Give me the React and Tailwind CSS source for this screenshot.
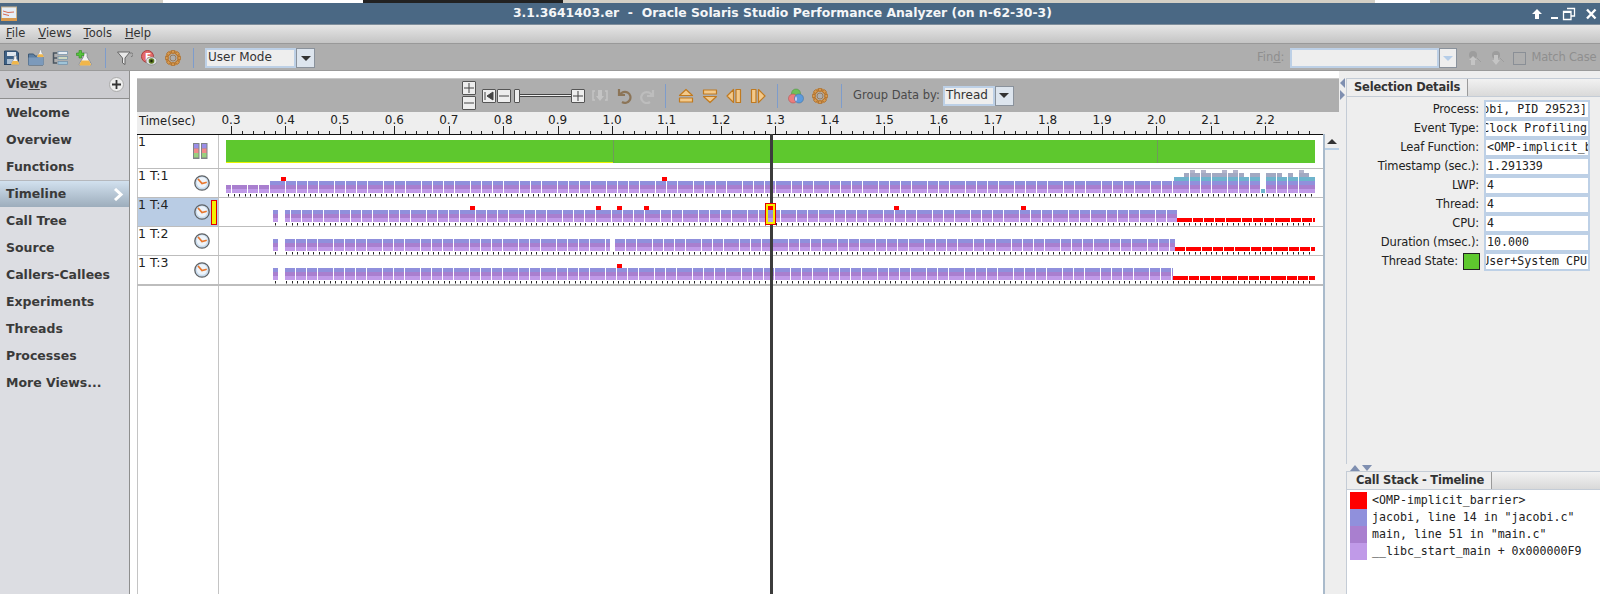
import React from "react";

const PATTERN = [15, 10, 10, 10, 15, 10, 10, 10, 15, 10, 10];

// walks the pattern from start to end, gap of 1px between runs
const fill = (start, end, offset = 0) => {
  const out = [];
  let x = start;
  let i = offset;
  while (x < end) {
    const w = Math.min(PATTERN[i % PATTERN.length], end - x);
    out.push([x, w]);
    x += w + 1;
    i++;
  }
  return out;
};

const T1_TAIL = [
  [1174, 10, 4], [1184, 5, 5], [1190, 5, 6], [1195, 5, 5], [1201, 5, 6], [1206, 5, 5],
  [1212, 5, 5], [1217, 5, 5], [1222, 5, 6], [1228, 5, 5], [1233, 5, 6], [1239, 5, 5],
  [1244, 5, 4], [1250, 10, 5], [1266, 10, 5], [1277, 5, 5], [1282, 5, 4], [1288, 5, 5],
  [1293, 5, 4], [1299, 5, 6], [1304, 5, 5], [1309, 6, 4],
];

const ROWS = [
  {
    label: "1 T:1",
    low: [[226, 5], [232, 15], [248, 10], [259, 10]],
    bars: fill(270, 1174),
    tail: T1_TAIL,
    reds: [],
    squares: [281, 662],
    from: 226,
  },
  {
    label: "1 T:4",
    selected: true,
    low: [],
    bars: [[273, 5], [285, 5], ...fill(291, 1177, 1)],
    tail: [],
    reds: fill(1177, 1315),
    squares: [470, 596, 617, 644, 894, 1021],
    from: 273,
  },
  {
    label: "1 T:2",
    low: [],
    bars: [[273, 5], ...fill(285, 610, 1), ...fill(615, 1175, 2)],
    tail: [],
    reds: fill(1175, 1315, 3),
    squares: [],
    from: 273,
  },
  {
    label: "1 T:3",
    low: [],
    bars: [[273, 5], ...fill(285, 1173, 1)],
    tail: [],
    reds: fill(1173, 1315, 0),
    squares: [617],
    from: 273,
  },
];

const BANDS = ["#c09ae8", "#a97fcf", "#9090dc", "#6fb4cc", "#a2a9c2", "#b3b5cb"];

const Stack = ({ x, w, levels }) => (
  <>
    {Array.from({ length: levels }).map((_, i) => (
      <rect key={i} x={x} y={i === 5 ? 1 : 20 - i * 4} width={w} height={i === 5 ? 3 : 4} fill={BANDS[i]} />
    ))}
  </>
);

const Ticks = ({ from }) => {
  const ticks = [];
  for (let x = from + 2.3; x < 1314; x += 5.44) {
    if (from === 273 && x > 279 && x < 285) continue;
    ticks.push(<rect key={x} x={Math.round(x)} y={25} width={1} height={2.5} fill="#222" />);
  }
  return <>{ticks}</>;
};

const Chart = ({ row }) => (
  <svg width="1104" height="28" viewBox="219 0 1104 28" className="block">
    {row.low.map(([x, w]) => <Stack key={x} x={x} w={w} levels={2} />)}
    {row.bars.map(([x, w]) => <Stack key={x} x={x} w={w} levels={3} />)}
    {row.tail.map(([x, w, l]) => <Stack key={x} x={x} w={w} levels={l} />)}
    {row.label === "1 T:1" && <rect x={1261} y={20} width={4} height={4} fill="#6fb4cc" />}
    {row.reds.map(([x, w]) => <rect key={x} x={x} y={20} width={w} height={4} fill="#ff0000" />)}
    {row.squares.map((x) => <rect key={x} x={x} y={8} width={5} height={4} fill="#ff0000" />)}
    <Ticks from={row.from} />
  </svg>
);

const Ruler = () => {
  const minor = [];
  for (let i = -3; i < 100; i++) {
    const x = 231 + i * 10.888;
    if (x > 1322 || x < 222) continue;
    const major = (i % 5 + 5) % 5 === 0;
    minor.push(<rect key={i} x={Math.round(x)} y={major ? 14 : 19} width={1} height={major ? 8 : 3} fill="#222" />);
  }
  const labels = [];
  for (let i = 0; i < 20; i++) {
    const x = 231 + i * 54.44;
    labels.push(
      <text key={i} x={x} y={12} textAnchor="middle" fontSize="12" fill="#222" fontFamily="'DejaVu Sans', sans-serif">
        {(0.3 + i * 0.1).toFixed(1)}
      </text>
    );
  }
  return (
    <svg width="1104" height="22" viewBox="219 0 1104 22" className="block">
      {minor}
      {labels}
    </svg>
  );
};

/* ---- icons ---- */
const Flask = ({ x = 0, y = 0, s = 1 }) => (
  <g transform={`translate(${x} ${y}) scale(${s})`}>
    <path d="M3.5 0h3v3l3.2 5.5c.5 1-.2 1.8-1.2 1.8h-7c-1 0-1.7-.8-1.2-1.8L3.5 3z" fill="#f4f4f4" stroke="#8a8f98" strokeWidth=".8" />
    <path d="M2 6h6l1.5 3c.2.6-.2 1-.9 1H1.400c-.7 0-1.100-.4-.9-1z" fill="#f0b64a" />
  </g>
);

const Svg16 = ({ children, size = 16, className = "" }) => (
  <svg width={size} height={size} viewBox="0 0 16 16" className={`block shrink-0 ${className}`}>{children}</svg>
);

const SaveIcon = () => (
  <Svg16>
    <path d="M0.500 1h12l2 2v11.500h-14.500z" fill="#3d6187" stroke="#2b4461" />
    <rect x="3" y="2" width="9" height="4" fill="#dfe6ee" />
    <rect x="3" y="9" width="6" height="5" fill="#a9bdd0" />
    <Flask x={7} y={6} s={0.85} />
  </Svg16>
);

const FolderIcon = () => (
  <Svg16>
    <path d="M0.500 4h5l1.500 2h8v9h-14.500z" fill="#5c7fa3" stroke="#3d5874" />
    <path d="M0.500 7.500h15v7.500h-15z" fill="#7c9abb" />
    <Flask x={9} y={0} s={0.7} />
  </Svg16>
);

const ListIcon = () => (
  <Svg16>
    <path d="M5 3H1.500v10H5" fill="none" stroke="#4a5560" strokeWidth="1.500" />
    <path d="M1.500 8H5" stroke="#4a5560" strokeWidth="1.500" />
    <rect x="6" y="1.500" width="9.500" height="3" fill="#e8eef4" stroke="#6f8fa8" strokeWidth=".7" />
    <rect x="6" y="6.500" width="9.500" height="3" fill="#cfd8c0" stroke="#6f8fa8" strokeWidth=".7" />
    <rect x="6" y="11.500" width="9.500" height="3" fill="#9fc4d8" stroke="#6f8fa8" strokeWidth=".7" />
  </Svg16>
);

const FlaskPlusIcon = () => (
  <Svg16>
    <Flask x={3} y={3} s={1.250} />
    <path d="M3 0.500h2.500v2.500H8v2.500H5.500V8H3V5.500H0.500V3H3z" fill="#55c43c" stroke="#2f8a22" strokeWidth=".6" />
  </Svg16>
);

const FilterIcon = () => (
  <Svg16>
    <path d="M0.500 2h12.500l-5 6v6.500l-2.500-1.500V8z" fill="#e8e8e8" stroke="#666" />
    <path d="M13 3.500a1.800 1.800 0 1 1 1 3" fill="none" stroke="#777" />
  </Svg16>
);

const EyeIcon = () => (
  <Svg16>
    <circle cx="6.500" cy="6.500" r="6" fill="#e46a6a" stroke="#a84040" />
    <text x="4" y="10" fontSize="9" fill="#fff" fontWeight="700" fontFamily="'DejaVu Sans', sans-serif">F</text>
    <ellipse cx="10.500" cy="11" rx="5.500" ry="4" fill="#dfe3e6" stroke="#777" strokeWidth=".6" />
    <circle cx="10.500" cy="11" r="2.800" fill="#5d7a1e" />
    <circle cx="10.500" cy="11" r="1.200" fill="#1c2408" />
  </Svg16>
);

const GearIcon = () => (
  <Svg16>
    <g fill="#d99a4e" stroke="#96602a" strokeWidth=".6">
      <circle cx="8" cy="8" r="6" fill="none" stroke="#c98a40" strokeWidth="3.400" />
      {[0, 45, 90, 135, 180, 225, 270, 315].map((a) => (
        <rect key={a} x="6.400" y="0.300" width="3.200" height="2.800" rx=".8" transform={`rotate(${a} 8 8)`} />
      ))}
    </g>
    <circle cx="8" cy="8" r="3" fill="#aeaeae" stroke="#8a5a28" strokeWidth=".6" />
  </Svg16>
);

const Orange = ({ d }) => (
  <Svg16>
    <path d={d} fill="#f3c98a" stroke="#c07a20" strokeWidth="1.200" strokeLinejoin="round" />
  </Svg16>
);

const ColorsIcon = () => (
  <Svg16>
    <circle cx="8" cy="5.500" r="4.500" fill="#6fbf5a" stroke="#4d8a40" strokeWidth=".5" />
    <circle cx="5" cy="10.500" r="4.500" fill="#ec7d7d" stroke="#a84a4a" strokeWidth=".5" />
    <circle cx="11" cy="10.500" r="4.500" fill="#5d9bdc" stroke="#3d6a9a" strokeWidth=".5" />
    <path d="M8 8.200a4.500 4.500 0 0 1 0 5.400 4.500 4.500 0 0 1 0-5.400z" fill="#d8d0f0" />
  </Svg16>
);

const ClockIcon = () => (
  <svg width="16" height="16" viewBox="0 0 16 16" className="block shrink-0">
    <circle cx="8" cy="8" r="7.200" fill="#c9dcee" stroke="#5f6265" strokeWidth="1.300" />
    <circle cx="8" cy="7.500" r="5.200" fill="#eef4fa" />
    <path d="M4.500 4.500L8 8.500l4-1" fill="none" stroke="#e8772e" strokeWidth="1.800" strokeLinecap="round" />
  </svg>
);

const MiniBars = () => (
  <svg width="15" height="16" viewBox="0 0 15 16" className="block shrink-0">
    {[0, 8].map((x) => (
      <g key={x}>
        <rect x={x} y="0" width="6.500" height="16" fill="#7f8288" />
        <rect x={x + 1} y="1" width="4.500" height="4.500" fill="#9a8ee8" />
        <rect x={x + 1} y="5.500" width="4.500" height="4.500" fill="#f08a8a" />
        <rect x={x + 1} y="10" width="4.500" height="4.500" fill="#9ad07e" />
      </g>
    ))}
  </svg>
);

const SmallBtn = ({ children, className = "" }) => (
  <div className={`w-[14px] h-[14px] flex items-center justify-center shrink-0 bg-[#eeeeee] border border-[#555] rounded-[1px] text-[#333] ${className}`}>
    {children}
  </div>
);

const Plus = () => (
  <svg width="10" height="10" viewBox="0 0 10 10"><path d="M0 5h10M5 0v10" stroke="#444" strokeWidth="1" /></svg>
);
const Minus = () => (
  <svg width="10" height="10" viewBox="0 0 10 10"><path d="M0 5h10" stroke="#444" strokeWidth="1" /></svg>
);

const Sep = ({ className = "" }) => <div className={`w-[1px] h-[20px] bg-[#7d9ccc] shrink-0 ${className}`} />;

const Combo = ({ text, w, btn = "w-[19px]", disabled }) => (
  <div className="flex h-[20px] shrink-0">
    <div className={`border-2 border-[#bdd0e6] bg-[#eeeeee] text-[12px] leading-[15px] px-[1px] text-[#333] ${w}`}>{text}</div>
    <div className={`flex items-center justify-center border border-[#8a929c] ${disabled ? "bg-[#eeeeee]" : "bg-[#dde5ee]"} ${btn}`}>
      <div className={`w-0 h-0 border-x-[5px] border-x-transparent border-t-[5px] ${disabled ? "border-t-[#b5cde8]" : "border-t-[#333]"}`} />
    </div>
  </div>
);

const VIEWS = ["Welcome", "Overview", "Functions", "Timeline", "Call Tree", "Source", "Callers-Callees", "Experiments", "Threads", "Processes", "More Views..."];

const DETAILS = [
  { label: "Process:", value: "obi, PID 29523]", right: true },
  { label: "Event Type:", value: "Clock Profiling", right: true },
  { label: "Leaf Function:", value: "<OMP-implicit_barrier>" },
  { label: "Timestamp (sec.):", value: "1.291339" },
  { label: "LWP:", value: "4" },
  { label: "Thread:", value: "4" },
  { label: "CPU:", value: "4" },
  { label: "Duration (msec.):", value: "10.000" },
  { label: "Thread State:", value: "User+System CPU", right: true, swatch: true },
];

const STACK = [
  ["#ff0000", "<OMP-implicit_barrier>"],
  ["#9090dc", 'jacobi, line 14 in "jacobi.c"'],
  ["#a97fcf", 'main, line 51 in "main.c"'],
  ["#c09ae8", "__libc_start_main + 0x000000F9"],
];

const Tab = ({ title, w }) => (
  <div className="flex h-[18px] bg-gradient-to-b from-[#f2f2f2] to-[#d9d9d9] border-b border-[#c4ccd6] shrink-0">
    <div className={`bg-[#eeeeee] border-r border-[#9a9a9a] font-bold text-[11.500px] tracking-[-0.2px] leading-[17px] text-[#333] whitespace-nowrap ${w}`}>{title}</div>
  </div>
);

export default function App() {
  return (
    <div className="w-[1600px] h-[594px] overflow-hidden flex flex-col bg-white font-['DejaVu_Sans',sans-serif] text-[#222]">
      {/* desktop strip behind the window */}
      <div className="flex h-[3px] shrink-0 bg-[#d4d0c6]">
        <div className="w-[163px]" />
        <div className="w-[200px] bg-white" />
        <div className="w-[200px] bg-[#222]" />
        <div className="w-[812px]" />
        <div className="w-[55px] bg-white" />
      </div>

      {/* title bar */}
      <div className="flex items-center h-[22px] shrink-0 bg-[#4a6884] border-b border-[#7f8e9c]">
        <svg width="16" height="16" viewBox="0 0 16 16" className="block ml-[1px] shrink-0">
          <rect x="0.500" y="1" width="15" height="13" fill="#e6eef6" stroke="#c9b28c" />
          <path d="M2 5l5 1.500 6-.5M2 8l6 1.500" stroke="#d86a50" strokeWidth="1" fill="none" />
          <rect x="0" y="12" width="16" height="3" fill="#d99a4e" />
        </svg>
        <div className="ml-[496px] font-bold text-[12.400px] text-[#f4f6f8] whitespace-pre">3.1.3641403.er  -  Oracle Solaris Studio Performance Analyzer (on n-62-30-3)</div>
        <div className="ml-auto flex items-center pr-[2px] text-white">
          <svg width="14" height="14" viewBox="0 0 14 14"><path d="M7 2l5 5H9v5H5V7H2z" fill="#fff" /></svg>
          <svg width="14" height="14" viewBox="0 0 14 14" className="ml-[4px]"><rect x="3" y="10" width="7" height="2" fill="#fff" /></svg>
          <svg width="14" height="14" viewBox="0 0 14 14"><path d="M1.500 4.500h7.500v8H1.500zM5 1.500h7.500v7.500H9" fill="none" stroke="#fff" strokeWidth="1.300" /><rect x="1" y="4" width="8" height="2" fill="#fff" /></svg>
          <svg width="14" height="14" viewBox="0 0 14 14" className="ml-[8px]"><path d="M3 2.500l8.500 9M11.500 2.500l-8.500 9" stroke="#fff" strokeWidth="2.400" /></svg>
        </div>
      </div>

      {/* menu */}
      <div className="flex items-center h-[19px] shrink-0 bg-gradient-to-b from-[#e6e6e6] to-[#c4c4c4] border-b border-[#999] text-[11.500px] text-[#333]">
        <span className="ml-[6px]"><u>F</u>ile</span>
        <span className="ml-[13px]"><u>V</u>iews</span>
        <span className="ml-[12px]"><u>T</u>ools</span>
        <span className="ml-[13px]"><u>H</u>elp</span>
      </div>

      {/* main toolbar */}
      <div className="flex items-center h-[27px] shrink-0 pt-[2px] bg-[#aeaeae] border-b border-[#9a9a9a]">
        <div className="flex items-center gap-[8px] ml-[4px]">
          <SaveIcon /><FolderIcon /><ListIcon /><FlaskPlusIcon />
        </div>
        <Sep className="ml-[13px]" />
        <div className="flex items-center gap-[8px] ml-[11px]">
          <FilterIcon /><EyeIcon /><GearIcon />
        </div>
        <Sep className="ml-[12px]" />
        <div className="ml-[11px]"><Combo text="User Mode" w="w-[91px]" /></div>
        <span className="ml-[942px] text-[11.500px] text-[#8f8f8f]">Fin<u>d</u>:</span>
        <div className="ml-[6px]"><Combo text="" w="w-[149px]" btn="w-[18px]" disabled /></div>
        <svg width="16" height="16" viewBox="0 0 16 16" className="block ml-[9px] shrink-0"><circle cx="7" cy="5" r="4" fill="#9d9d9d" /><path d="M7 6l4 4H9v5H5v-5H3z" fill="#c4c4c4" /><path d="M11 8l4 4" stroke="#9d9d9d" /></svg>
        <svg width="16" height="16" viewBox="0 0 16 16" className="block ml-[7px] shrink-0"><circle cx="7" cy="5" r="4" fill="#9d9d9d" /><path d="M5 5h4v5h2l-4 5-4-5h2z" fill="#c4c4c4" /><path d="M11 8l4 4" stroke="#9d9d9d" /></svg>
        <div className="ml-[8px] w-[13px] h-[13px] border border-[#8a8f96] shrink-0" />
        <span className="ml-[5px] text-[11.500px] tracking-[-0.2px] text-[#8f8f8f] whitespace-nowrap">Match Case</span>
      </div>

      <div className="flex flex-1 min-h-0">
        {/* views sidebar */}
        <div className="w-[130px] shrink-0 bg-[#dcdde2] border-r border-[#8e8e8e] flex flex-col font-bold text-[12.500px] text-[#3a3a3a]">
          <div className="flex items-center h-[28px] bg-[#cbcbcf] border-b border-[#8e8e8e] pl-[6px] pr-[5px]">
            <span>Vie<u>w</u>s</span>
            <div className="ml-auto w-[15px] h-[15px] rounded-full bg-[#eeeeee] border border-[#aaa] flex items-center justify-center">
              <svg width="9" height="9" viewBox="0 0 9 9"><path d="M4.500 0v9M0 4.500h9" stroke="#333" strokeWidth="1.800" /></svg>
            </div>
          </div>
          {VIEWS.map((name) =>
            name === "Timeline" ? (
              <div key={name} className="flex items-center h-[27px] pt-[1px] pl-[6px] pr-[5px] bg-gradient-to-b from-[#d2e1ef] to-[#9dadbc] border-t border-[#b5b8bd]">
                <span>{name}</span>
                <svg width="11" height="13" viewBox="0 0 11 13" className="ml-auto"><path d="M2 1l6 5.500-6 5.500" fill="none" stroke="#fff" strokeWidth="3" /></svg>
              </div>
            ) : (
              <div key={name} className="flex items-center h-[27px] pt-[1px] pl-[6px]">{name}</div>
            )
          )}
        </div>

        {/* timeline */}
        <div className="w-[1209px] shrink-0 pt-[7px] pl-[7px] flex flex-col bg-white">
          <div className="flex items-center h-[34px] shrink-0 bg-[#aeaeae] border-t border-[#c8c8c8]">
            <div className="ml-[325px] flex flex-col gap-[1px] shrink-0">
              <SmallBtn><Plus /></SmallBtn>
              <SmallBtn><Minus /></SmallBtn>
            </div>
            <SmallBtn className="ml-[6px]">
              <svg width="10" height="10" viewBox="0 0 10 10"><path d="M1 1v8M9 1v8L3 5z" stroke="#444" fill="#444" /></svg>
            </SmallBtn>
            <SmallBtn className="ml-[1px]"><Minus /></SmallBtn>
            <div className="flex items-center w-[57px] shrink-0 ml-[3px]">
              <div className="w-[6px] h-[14px] bg-[#eeeeee] border border-[#555] rounded-[1px] shrink-0" />
              <div className="flex-1 h-[3px] bg-[#eeeeee] border-y border-[#444]" />
            </div>
            <SmallBtn><Plus /></SmallBtn>
            <Svg16 className="ml-[7px]"><path d="M3 3H1v9h2M13 3h2v9h-2" fill="none" stroke="#c4c4c4" strokeWidth="1.500" /><path d="M6 2v6H4l4 5 4-5h-2V2z" fill="#c4c4c4" /></Svg16>
            <Svg16 className="ml-[8px]"><path d="M3 1v6h6M4 7a5.500 5.500 0 1 1 2 7" fill="none" stroke="#8c7558" strokeWidth="2.200" /></Svg16>
            <Svg16 className="ml-[8px]"><path d="M13 2v6H7M12 8a5.500 5.500 0 1 0-2 6" fill="none" stroke="#bdbdbd" strokeWidth="2.200" /></Svg16>
            <Sep className="ml-[9px] h-[24px]" />
            <div className="flex items-center gap-[8px] ml-[12px]">
              <Orange d="M8 1.500l6.500 6h-13zM1.500 10h13v4h-13z" />
              <Orange d="M8 14.500l-6.500-6h13zM1.500 2h13v4h-13z" />
              <Orange d="M1 8l6.500-6.500v13zM10 1.500h4.500v13H10z" />
              <Orange d="M15 8l-6.500 6.500v-13zM1.500 1.500H6v13H1.500z" />
            </div>
            <Sep className="ml-[11px] h-[24px]" />
            <div className="flex items-center gap-[8px] ml-[10px]"><ColorsIcon /><GearIcon /></div>
            <Sep className="ml-[13px] h-[24px]" />
            <span className="ml-[11px] text-[11.500px] text-[#4a4a4a] whitespace-nowrap">Group Data by:</span>
            <div className="ml-[3px]"><Combo text="Thread" w="w-[52px]" /></div>
          </div>

          <div className="flex h-[22px] shrink-0 bg-[#eeeeee]">
            <div className="w-[82px] shrink-0 pl-[2px] text-[11.500px] leading-[16px] pt-[1px] whitespace-nowrap">Time(sec)</div>
            <Ruler />
          </div>

          <div className="flex flex-1 min-h-0">
            <div className="relative w-[1186px] shrink-0 flex flex-col border-t border-[#111]">
              <div className="flex h-[34px] shrink-0 border-b border-[#bdbdbd]">
                <div className="w-[82px] shrink-0 flex border-x border-[#c4c4c4] text-[12.500px] leading-[14px]">
                  <span>1</span>
                  <div className="ml-auto mr-[10px] mt-[8px]"><MiniBars /></div>
                </div>
                <svg width="1104" height="33" viewBox="219 135 1104 33" className="block">
                  <rect x="226" y="140" width="1089" height="23" fill="#5ec82e" />
                  <rect x="226" y="162" width="387" height="1" fill="#e6f200" />
                  <rect x="613" y="140" width="1" height="23" fill="#6f9a5a" />
                  <rect x="1157" y="140" width="1" height="23" fill="#6f9a5a" />
                </svg>
              </div>
              {ROWS.map((row) => (
                <div key={row.label} className="flex h-[29px] shrink-0 border-b border-[#bdbdbd]">
                  <div className={`relative w-[82px] shrink-0 flex border-x border-[#c4c4c4] text-[12.500px] leading-[14px] ${row.selected ? "bg-[#b9cce4]" : ""}`}>
                    <span>{row.label}</span>
                    <div className="absolute left-[56px] top-[6px]"><ClockIcon /></div>
                    {row.selected && (
                      <div className="absolute left-[73px] top-[2px] w-[6px] h-[25px] bg-[#f5f000] border border-[#e00000]" />
                    )}
                  </div>
                  <Chart row={row} />
                </div>
              ))}
              <div className="h-[1px] shrink-0 bg-[#bdbdbd]" />
              <div className="flex-1 flex">
                <div className="w-[82px] shrink-0 border-x border-[#c4c4c4]" />
              </div>
              {/* selection cursor and selected event */}
              <div className="absolute left-[633px] top-[-1px] bottom-0 w-[2.500px] bg-[#3c3c3c]" />
              <svg width="11" height="22" viewBox="0 0 11 22" className="absolute left-[628px] top-[68px]">
                <rect x="0.500" y="0.500" width="10" height="21" fill="#f5f000" stroke="#e00000" />
                <rect x="3" y="3" width="5" height="4" fill="#ff0000" />
                <rect x="3" y="7" width="5" height="4" fill="#9090dc" />
                <rect x="3" y="11" width="5" height="4" fill="#a97fcf" />
                <rect x="3" y="15" width="5" height="4" fill="#c09ae8" />
              </svg>
            </div>
            {/* scrollbar */}
            <div className="w-[16px] shrink-0 bg-[#eeeeee] border-l-2 border-[#a9bacb] flex flex-col">
              <div className="h-[16px] flex items-center justify-center border-b-2 border-[#b8cfe5]">
                <div className="w-0 h-0 border-x-[5px] border-x-transparent border-b-[5px] border-b-[#333]" />
              </div>
            </div>
          </div>
        </div>

        {/* splitter */}
        <div className="w-[7px] shrink-0 bg-[#eeeeee] flex flex-col pt-[7px] pl-[1px] gap-[2px]">
          <div className="w-0 h-0 border-y-[5px] border-y-transparent border-r-[5px] border-r-[#7f8fb0]" />
          <div className="w-0 h-0 border-y-[5px] border-y-transparent border-l-[5px] border-l-[#7f8fb0]" />
        </div>

        {/* right panels */}
        <div className="flex-1 flex flex-col min-w-0 bg-[#eeeeee] pt-[7px]">
          <div className="h-[386px] shrink-0 flex flex-col border-l border-t border-[#c4ccd6]">
            <Tab title="Selection Details" w="w-[121px] pl-[7px]" />
            <div className="pt-[3px] pr-[10px] flex flex-col">
              {DETAILS.map((d) => (
                <div key={d.label} className="flex h-[19px] items-center">
                  <div className="flex-1 text-right text-[11.500px] tracking-[-0.15px] whitespace-nowrap text-[#222] pr-[5px]">{d.label}</div>
                  {d.swatch && <div className="w-[17px] h-[17px] bg-[#5ec82e] border border-[#222] mr-[4px] shrink-0" />}
                  <div className={`w-[106px] h-[19px] shrink-0 bg-white border-2 border-[#bdd0e6] overflow-hidden flex whitespace-nowrap font-['DejaVu_Sans_Mono',monospace] text-[11.600px] leading-[15px] text-[#222] ${d.right ? "justify-end pr-[1px]" : "pl-[1px]"}`}>
                    <span className="shrink-0">{d.value}</span>
                  </div>
                </div>
              ))}
            </div>
          </div>
          <div className="h-[7px] shrink-0 flex items-center pl-[4px] gap-[2px]">
            <div className="w-0 h-0 border-x-[5px] border-x-transparent border-b-[6px] border-b-[#7f8fb0]" />
            <div className="w-0 h-0 border-x-[5px] border-x-transparent border-t-[6px] border-t-[#7f8fb0]" />
          </div>
          <div className="flex-1 flex flex-col border-l border-t border-[#c4ccd6] bg-white">
            <Tab title="Call Stack - Timeline" w="w-[145px] pl-[9px]" />
            <div className="pt-[2px] pl-[3px] flex flex-col">
              {STACK.map(([color, text]) => (
                <div key={text} className="flex items-center h-[17px]">
                  <div className="w-[17px] h-[17px] shrink-0" style={{ background: color }} />
                  <span className="ml-[5px] font-['DejaVu_Sans_Mono',monospace] text-[11.600px] text-[#222] whitespace-pre">{text}</span>
                </div>
              ))}
            </div>
          </div>
        </div>
      </div>
    </div>
  );
}
